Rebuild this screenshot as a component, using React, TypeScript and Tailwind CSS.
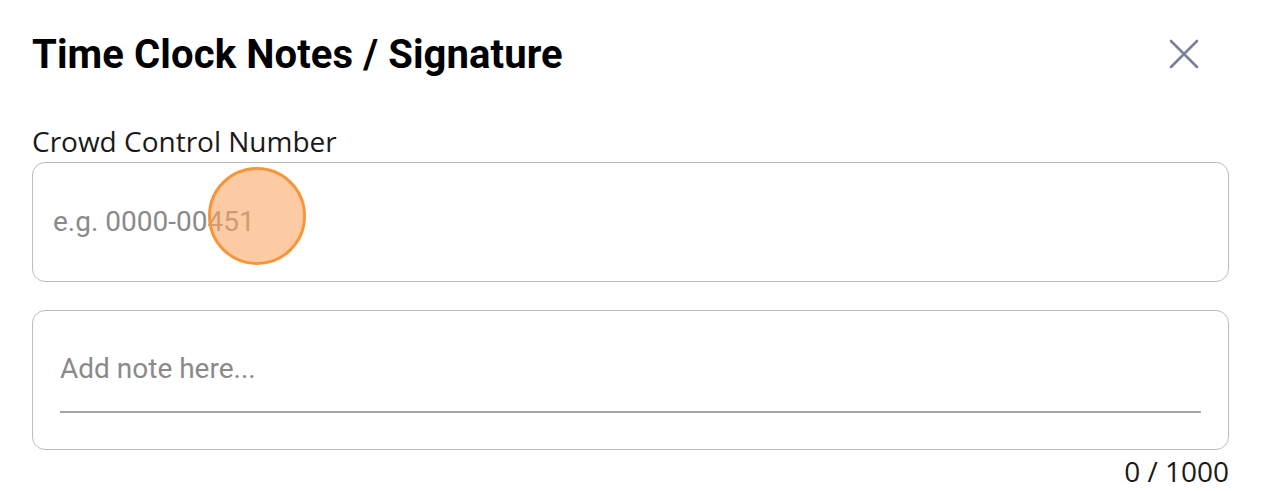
export default function App() {
  return (
    <div className="w-[1267px] h-[491px] bg-white overflow-hidden">
      <div className="pl-[32px] pr-[38px] pt-[31px]">
        {/* Header */}
        <div className="flex items-center justify-between h-[48px]">
          <h1 className="text-[40px] leading-[48px] font-bold text-black tracking-[0.1px] [font-family:Roboto,sans-serif]">
            Time Clock Notes / Signature
          </h1>
          <button className="mr-[30px] -mt-[2px] text-[#7c8097]">
            <svg width="30" height="30" viewBox="0 0 30 30" fill="none" stroke="currentColor" strokeWidth="2.6" strokeLinecap="round">
              <path d="M2 2 L28 28 M28 2 L2 28" />
            </svg>
          </button>
        </div>

        {/* Crowd control field */}
        <label className="block mt-[44px] text-[28px] leading-[36px] text-[#1a1a1a] [font-family:'Open_Sans',sans-serif]">
          Crowd Control Number
        </label>
        <div className="relative mt-[3px] h-[120px] rounded-[13px] border-[1.5px] border-[#bdbdbd] flex items-center pl-[20px]">
          <span className="text-[28px] text-[#8a8a8a] [font-family:Roboto,sans-serif]">e.g. 0000-00451</span>
          <div className="absolute left-[175px] top-[4px] w-[98px] h-[98px] rounded-full bg-[#fba866]/60 border-[3.5px] border-[#f7953b]" />
        </div>

        {/* Note field */}
        <div className="mt-[28px] h-[140px] rounded-[13px] border-[1.5px] border-[#bdbdbd] px-[27px] pt-[40px]">
          <div className="text-[28px] leading-[36px] text-[#8a8a8a] [font-family:Roboto,sans-serif]">Add note here...</div>
          <div className="mt-[24px] h-[2px] bg-[#a6a6a6]" />
        </div>
        <div className="text-right mt-[3px] text-[28px] leading-[36px] text-[#1a1a1a] [font-family:'Open_Sans',sans-serif]">
          0 / 1000
        </div>
      </div>
    </div>
  );
}
